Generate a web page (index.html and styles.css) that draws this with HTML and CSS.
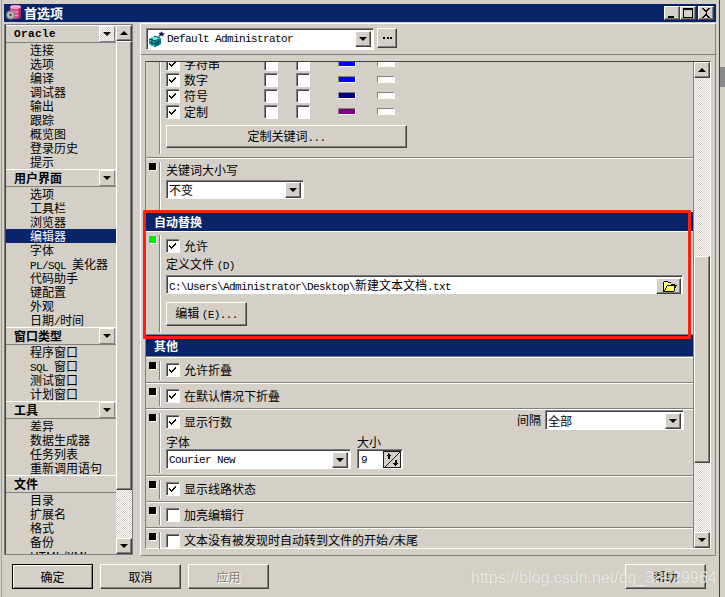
FILE: index.html
```html
<!DOCTYPE html>
<html lang="zh">
<head>
<meta charset="utf-8">
<title>首选项</title>
<link rel="stylesheet" href="styles.css">
</head>
<body>
<svg class="defs" width="0" height="0" aria-hidden="true">
  <symbol id="tick" viewBox="0 0 13 13"><path d="M3 6h1v1h1v1h1V7h1V6h1V5h1V4h1v2H9v1H8v1H7v1H6v1H5V9H4V8H3z" fill="#000"/></symbol>
</svg>
<div class="window">
  <header class="title">
    <svg class="ticon" width="16" height="16" viewBox="0 0 16 16">
      <path d="M4 2c0-3 11-3 11 0v10c0 2.500-11 2.500-11 0z" fill="#d84a90"/>
      <ellipse cx="9.500" cy="2" rx="5.500" ry="2" fill="#f4a8cc"/>
      <path d="M5 6c2 1.500 7 1.500 9 0M5 9.500c2 1.500 7 1.500 9 0" stroke="#f4a8cc" fill="none"/>
      <path d="M12.500 3.500h2.500v9l-2.500 1.500z" fill="#a02868"/>
      <circle cx="4.500" cy="10" r="4.500" fill="#8c8c8c"/>
      <circle cx="4.500" cy="10" r="3" fill="#c4c4c4"/>
      <circle cx="4.500" cy="10" r="1.400" fill="#505050"/>
    </svg>
    <span class="ttext">首选项</span>
    <div class="wbtns">
      <button class="wb"><svg width="14" height="12" viewBox="0 0 14 12" shape-rendering="crispEdges"><rect x="3" y="9" width="6" height="2"/></svg></button>
      <button class="wb"><svg width="14" height="12" viewBox="0 0 14 12" shape-rendering="crispEdges"><path d="M2 1h10v10H2zM3 3v7h8V3z" fill-rule="evenodd"/></svg></button>
      <button class="wb wb-close"><svg width="14" height="12" viewBox="0 0 14 12" shape-rendering="crispEdges"><path d="M3 1h2v1h1v1h2V2h1V1h2v1h-1v1H9v1H8v1H7.500v2H8v1h1v1h1v1h1v1H9v-1H8V9H6v1H5v1H3v-1h1V9h1V8h1V7h.5V5H6V4H5V3H4V2H3z"/></svg></button>
    </div>
  </header>

  <div class="columns">
    <aside class="side">
      <div class="list">
        <div class="lhead"><span class="mono-b">Oracle</span><span class="ldrop dither"><i class="dn"></i></span></div>
        <div class="li">连接</div><div class="li">选项</div><div class="li">编译</div><div class="li">调试器</div><div class="li">输出</div><div class="li">跟踪</div><div class="li">概览图</div><div class="li">登录历史</div><div class="li">提示</div>
        <div class="lhead"><b>用户界面</b><span class="ldrop"><i class="dn"></i></span></div>
        <div class="li">选项</div><div class="li">工具栏</div><div class="li">浏览器</div><div class="li sel">编辑器</div><div class="li">字体</div><div class="li"><span class="mono">PL/SQL </span>美化器</div><div class="li">代码助手</div><div class="li">键配置</div><div class="li">外观</div><div class="li">日期<span class="mono">/</span>时间</div>
        <div class="lhead"><b>窗口类型</b><span class="ldrop"><i class="dn"></i></span></div>
        <div class="li">程序窗口</div><div class="li"><span class="mono">SQL </span>窗口</div><div class="li">测试窗口</div><div class="li">计划窗口</div>
        <div class="lhead"><b>工具</b><span class="ldrop"><i class="dn"></i></span></div>
        <div class="li">差异</div><div class="li">数据生成器</div><div class="li">任务列表</div><div class="li">重新调用语句</div>
        <div class="lhead"><b>文件</b></div>
        <div class="li">目录</div><div class="li">扩展名</div><div class="li">格式</div><div class="li">备份</div><div class="li">HTML/XML</div>
      </div>
      <div class="sb">
        <div class="raised sbtn"><i class="up"></i></div>
        <div class="raised thumb side-thumb"></div>
        <div class="track dither"></div>
        <div class="raised sbtn"><i class="dn"></i></div>
      </div>
    </aside>

    <main class="main">
      <div class="tools">
        <div class="field combo profile">
          <svg class="picon" width="16" height="16" viewBox="0 0 16 16">
            <path d="M0 8l5-3 7 2v6l-6 3-6-3z" fill="#10c8c8"/>
            <path d="M6 9v7l6-3V7z" fill="#0a8a90"/>
            <path d="M0 8l5-3 7 2-6 2z" fill="#60eeee"/>
            <path d="M0 11l6 2 6-3M0 8l6 2M3 7v8M6 9v7M9 8v7M5 5l6 2" stroke="#043438" stroke-width=".9" fill="none"/>
            <path d="M9 6l2-3-2-1 3-.5L13 0l.5 2 2.500.5-2 1.500.5 2-2-1.500z" fill="#102050"/>
          </svg>
          <span class="mono ctext">Default Administrator</span>
          <span class="raised cbtn"><i class="dn"></i></span>
        </div>
        <button class="raised more"><svg width="9" height="3" viewBox="0 0 9 3" shape-rendering="crispEdges"><path d="M0 0h2v2H0zM3.500 0h2v2h-2zM7 0h2v2H7z"/></svg></button>
      </div>

      <div class="scroll">
        <div class="content">
          <section class="sec sec-top">
            <div class="gut gut-top"></div>
            <div class="body body-top">
              <div class="syn"><label class="chk"><span class="box"><svg width="13" height="13"><use href="#tick"/></svg></span>字符串</label><span class="box"></span><span class="box"></span><span class="sw sw-blue"></span><span class="sw"></span></div>
              <div class="syn"><label class="chk"><span class="box"><svg width="13" height="13"><use href="#tick"/></svg></span>数字</label><span class="box"></span><span class="box"></span><span class="sw sw-blue"></span><span class="sw"></span></div>
              <div class="syn"><label class="chk"><span class="box"><svg width="13" height="13"><use href="#tick"/></svg></span>符号</label><span class="box"></span><span class="box"></span><span class="sw sw-navy"></span><span class="sw"></span></div>
              <div class="syn"><label class="chk"><span class="box"><svg width="13" height="13"><use href="#tick"/></svg></span>定制</label><span class="box"></span><span class="box"></span><span class="sw sw-purple"></span><span class="sw"></span></div>
              <button class="raised btn-kw">定制关键词<span class="mono">...</span></button>
            </div>
          </section>

          <section class="sec sec-case">
            <div class="gut"><i class="sq"></i></div>
            <div class="body">
              <div class="lbl">关键词大小写</div>
              <div class="field combo combo-case"><span class="ctext">不变</span><span class="raised cbtn"><i class="dn"></i></span></div>
            </div>
          </section>

          <div class="hdr">自动替换</div>
          <section class="sec sec-auto">
            <div class="gut"><i class="sq sq-on"></i></div>
            <div class="body">
              <label class="chk"><span class="box"><svg width="13" height="13"><use href="#tick"/></svg></span>允许</label>
              <div class="lbl lbl-def">定义文件 <span class="mono">(D)</span></div>
              <div class="field combo path">
                <span class="mono ctext">C:\Users\Administrator\Desktop\<span class="cjk">新建文本文档</span>.txt</span>
                <span class="raised fbtn">
                  <svg width="18" height="14" viewBox="0 0 18 14" shape-rendering="crispEdges">
                    <path d="M3 3h1V2h4v1h3v2h4v1h2v1l-2 5H3z" fill="#ffff60"/>
                    <path d="M3 3h1V2h4v1h3v2h4v1h-4V4H8V3H4v9H3zM3 12h11v1H3zM7 6h10v1h-1v2h-1v3h-1V7H7zM4 11h1V9h1V7h1v2H6v2H5v1H4z" fill="#000"/>
                  </svg>
                </span>
              </div>
              <button class="raised btn-edit">编辑 <span class="mono">(E)...</span></button>
            </div>
          </section>

          <div class="hdr hdr-other">其他</div>
          <section class="sec row">
            <div class="gut"><i class="sq"></i></div>
            <div class="body"><label class="chk"><span class="box"><svg width="13" height="13"><use href="#tick"/></svg></span>允许折叠</label></div>
          </section>
          <section class="sec row">
            <div class="gut"><i class="sq"></i></div>
            <div class="body"><label class="chk"><span class="box"><svg width="13" height="13"><use href="#tick"/></svg></span>在默认情况下折叠</label></div>
          </section>
          <section class="sec sec-lines">
            <div class="gut"><i class="sq"></i></div>
            <div class="body">
              <div class="line-top">
                <label class="chk"><span class="box"><svg width="13" height="13"><use href="#tick"/></svg></span>显示行数</label>
                <div class="interval"><span>间隔</span><div class="field combo combo-int"><span class="ctext">全部</span><span class="raised cbtn"><i class="dn"></i></span></div></div>
              </div>
              <div class="font-row">
                <div class="font-col">
                  <div class="lbl">字体</div>
                  <div class="field combo combo-font"><span class="mono ctext">Courier New</span><span class="raised cbtn"><i class="dn"></i></span></div>
                </div>
                <div class="font-col">
                  <div class="lbl">大小</div>
                  <div class="field combo spin"><span class="mono ctext">9</span>
                    <svg class="spinb" width="18" height="17" viewBox="0 0 18 17" shape-rendering="crispEdges">
                      <rect width="18" height="17" fill="#d4d0c8"/>
                      <path d="M0 0h18v1H1v16H0zM17 0h1v17h-1zM0 16h18v1H0zM16 1h1v1h-1zM15 2h1v1h-1zM14 3h1v1h-1zM13 4h1v1h-1zM12 5h1v1h-1zM11 6h1v1h-1zM10 7h1v1h-1zM9 8h1v1H9zM8 9h1v1H8zM7 10h1v1H7zM6 11h1v1H6zM5 12h1v1H5zM4 13h1v1H4zM3 14h1v1H3zM2 15h1v1H2z" fill="#202020"/>
                      <path d="M5 2h1v1h1v1h1v1H7v3H5V5H4V4h1zM12 9h2v3h1v1h-1v1h-1v1h-1v-1h-1v-1h-1v-1h2z" fill="#000"/>
                    </svg>
                  </div>
                </div>
              </div>
            </div>
          </section>
          <section class="sec row">
            <div class="gut"><i class="sq"></i></div>
            <div class="body"><label class="chk"><span class="box"><svg width="13" height="13"><use href="#tick"/></svg></span>显示线路状态</label></div>
          </section>
          <section class="sec row">
            <div class="gut"><i class="sq"></i></div>
            <div class="body"><label class="chk"><span class="box"></span>加亮编辑行</label></div>
          </section>
          <section class="sec row">
            <div class="gut"><i class="sq"></i></div>
            <div class="body"><label class="chk"><span class="box"></span><span>文本没有被发现时自动转到文件的开始<span class="slash">/</span>末尾</span></label></div>
          </section>
        </div>
        <div class="sb sb-main">
          <div class="raised sbtn"><i class="up"></i></div>
          <div class="track dither track-a"></div>
          <div class="raised thumb main-thumb"></div>
          <div class="track dither"></div>
          <div class="raised sbtn"><i class="dn"></i></div>
        </div>
      </div>
    </main>
  </div>

  <footer class="foot">
    <button class="raised act act-default">确定</button>
    <button class="raised act">取消</button>
    <button class="raised act act-off">应用</button>
    <button class="raised act act-help">帮助</button>
  </footer>
</div>
<div class="strip"><div class="band"></div></div>
<div class="redbox"></div>
<div class="mark">https://blog.csdn.net/qq_38929964</div>
</body>
</html>
```

FILE: styles.css
```css
* { box-sizing: border-box; }
html, body { margin: 0; height: 100%; }
body {
  width: 725px;
  height: 597px;
  overflow: hidden;
  display: flex;
  background: #d4d0c8;
  color: #000;
  font: 12px/14px "Noto Sans CJK SC", "Liberation Sans", sans-serif;
  position: relative;
}
.defs { position: absolute; }
button { font: inherit; color: inherit; padding: 0; margin: 0; background: #d4d0c8; }
i { display: block; }

.mono { font: 11px/14px "Liberation Mono", monospace; letter-spacing: -.6px; }
.mono .cjk, .cjk { font: 12px/14px "Noto Sans CJK SC", sans-serif; letter-spacing: 0; }
.mono-b { font: bold 11px/14px "Liberation Mono", monospace; letter-spacing: .4px; }
.slash { font: 12px/14px "Liberation Mono", monospace; letter-spacing: -1.2px; }

.raised {
  background: #d4d0c8;
  border: 1px solid;
  border-color: #fff #404040 #404040 #fff;
  box-shadow: inset -1px -1px #808080;
}
.dither {
  background-color: #d4d0c8;
  background-image: conic-gradient(#fff 25%, #d4d0c8 0 50%, #fff 0 75%, #d4d0c8 0);
  background-size: 2px 2px;
}
.dn { width: 0; height: 0; border-style: solid; border-width: 4px 4px 0; border-color: #000 transparent transparent; }
.up { width: 0; height: 0; border-style: solid; border-width: 0 4px 4px; border-color: transparent transparent #000; }

/* window frame */
.window {
  width: 719px;
  height: 597px;
  margin-left: 1px;
  border-left: 1px solid #a0a0a0;
  border-right: 1px solid #404040;
  padding: 4px 3px 0 2px;
  flex: none;
  display: flex;
  flex-direction: column;
}
.title {
  height: 18px;
  flex: none;
  background: #0a246a;
  display: flex;
  align-items: center;
  padding-left: 2px;
  color: #fff;
}
.ticon { flex: none; margin-right: 2px; }
.ttext { font-weight: bold; font-size: 13px; line-height: 18px; }
.wbtns { margin-left: auto; display: flex; padding-right: 2px; }
.wb {
  width: 16px;
  height: 14px;
  border: 1px solid;
  border-color: #fff #404040 #404040 #fff;
  box-shadow: inset -1px -1px #808080;
  display: flex;
  align-items: center;
  justify-content: center;
}
.wb-close { margin-left: 2px; }

.columns { display: flex; flex: none; height: 533px; margin-top: 1px; gap: 7px; }

/* left navigator */
.side {
  width: 129px;
  height: 531px;
  margin-top: 1px;
  flex: none;
  border: 1px solid #808080;
  box-shadow: inset 1px 1px #404040;
  padding-left: 1px;
  display: flex;
}
.list { width: 110px; flex: none; overflow: hidden; }
.lhead {
  height: 18px;
  border-top: 1px solid #fff;
  border-bottom: 1px solid #808080;
  display: flex;
  align-items: center;
  justify-content: space-between;
  padding-left: 8px;
}
.lhead b { font-weight: bold; font-size: 12px; }
.ldrop {
  width: 16px;
  height: 16px;
  margin-right: 1px;
  border: 1px solid;
  border-color: #fff #808080 #808080 #fff;
  display: flex;
  align-items: center;
  justify-content: center;
}
.li { height: 14px; padding-left: 24px; line-height: 14px; white-space: nowrap; }
.li.sel { background: #0a246a; color: #fff; }

.sb { width: 16px; flex: none; display: flex; flex-direction: column; }
.sbtn { height: 16px; flex: none; display: flex; align-items: center; justify-content: center; }
.track { flex: 1; min-height: 0; }
.thumb { flex: none; }
.side-thumb { height: 449px; }
.sb-main { border-left: 1px solid #808080; width: 17px; }
.track-a { flex: none; height: 178px; }
.main-thumb { height: 207px; }

/* right panel */
.main {
  width: 576px;
  height: 533px;
  flex: none;
  border: 1px solid;
  border-color: #fff #808080 #808080 #fff;
  padding: 0 4px;
  display: flex;
  flex-direction: column;
}
.tools {
  height: 31px;
  flex: none;
  margin: 0 -4px;
  padding: 4px 0 0 5px;
  border-bottom: 1px solid #808080;
  display: flex;
  gap: 3px;
  align-items: flex-start;
  position: relative;
}
.field {
  background: #fff;
  border: 1px solid;
  border-color: #808080 #fff #fff #808080;
  box-shadow: inset 1px 1px #404040, 1px 1px #d4d0c8;
}
.combo { display: flex; align-items: center; height: 20px; padding: 2px 2px 1px 2px; }
.ctext { flex: 1; min-width: 0; white-space: nowrap; overflow: hidden; }
.cbtn {
  width: 16px;
  height: 16px;
  flex: none;
  display: flex;
  align-items: center;
  justify-content: center;
}
.profile { width: 228px; height: 22px; padding-bottom: 2px; }
.picon { flex: none; margin: 0 2px 0 0; }
.more { width: 20px; height: 20px; display: flex; align-items: center; justify-content: center; }
.more svg { display: block; }

.scroll {
  margin-top: 6px;
  width: 566px;
  height: 488px;
  flex: none;
  border-top: 1px solid #404040;
  border-left: 1px solid #808080;
  border-right: 1px solid #fff;
  border-bottom: 1px solid #fff;
  display: flex;
  position: relative;
}
.content { width: 547px; flex: none; overflow: hidden; height: 487px; }

.sec {
  display: flex;
  border-top: 1px solid #fff;
  border-bottom: 1px solid #808080;
  overflow: hidden;
}
.row { height: 26px; }
.sec-top { height: 96px; border-top: 0; }
.sec-case { height: 54px; border-bottom: 0; }
.sec-auto { height: 104px; }
.sec-lines { height: 67px; overflow: visible; }
.gut {
  width: 15px;
  flex: none;
  margin: 3px 0 2px;
  padding: 1px 0 0 3px;
  border-right: 1px solid #fff;
  box-shadow: inset -1px 0 #808080;
}
.gut-top { margin: 0 0 3px; }
.sq { width: 7px; height: 7px; background: #000; border: 1px solid #000; box-shadow: 1px 1px #fff; }
.sq-on { background: #00e800; border-color: #00f000; }
.body { flex: 1; min-width: 0; padding: 5px 9px 0 5px; }
.body-top { margin-top: -6px; padding-top: 0; overflow: visible; }
.sec-case .body { padding-top: 4px; }
.sec-auto .body { padding-top: 7px; }

.chk { display: flex; align-items: center; gap: 5px; height: 13px; white-space: nowrap; }
.box {
  width: 13px;
  height: 13px;
  flex: none;
  background: #fff;
  box-shadow: inset 1px 1px #808080, inset 2px 2px #404040, inset -1px -1px #fff, 1px 1px #fff;
  display: block;
}
.box svg { display: block; }
.syn {
  height: 16px;
  display: grid;
  grid-template-columns: 98px 32px 42px 39px 17px;
  align-items: start;
  padding-top: 1px;
}
.sw { width: 17px; height: 6px; margin-top: 3px; background: #fff; border-top: 1px solid #808080; border-left: 1px solid #808080; box-shadow: 1px 1px #fff; }
.sw-blue { background: #0000ff; }
.sw-navy { background: #000080; }
.sw-purple { background: #800080; }

.btn-kw { display: block; width: 241px; height: 23px; margin-top: 5px; }
.lbl { height: 14px; }
.combo-case { width: 138px; height: 19px; margin-top: 3px; }

.hdr {
  height: 19px;
  background: #0a246a;
  color: #fff;
  font-weight: bold;
  font-size: 12px;
  line-height: 19px;
  padding-left: 8px;
}
.hdr-other { height: 22px; line-height: 22px; border-bottom: 1px solid #808080; }

.lbl-def { margin-top: 5px; }
.path { width: 517px; height: 19px; margin-top: 4px; padding: 2px 1px 0 2px; }
.fbtn {
  width: 25px;
  height: 16px;
  flex: none;
  display: flex;
  align-items: center;
  justify-content: center;
}
.btn-edit { display: block; width: 81px; height: 24px; margin-top: 8px; }

.line-top { display: flex; justify-content: space-between; height: 13px; }
.interval { display: flex; gap: 4px; margin-top: -5px; height: 20px; align-items: center; }
.combo-int { width: 139px; }
.font-row { display: flex; gap: 6px; margin-top: 7px; }
.combo-font { width: 185px; }
.spin { width: 46px; padding: 1px 1px 0 3px; }
.spinb { display: block; flex: none; }

/* footer buttons */
.foot { flex: none; display: flex; gap: 7px; padding: 8px 10px 0 8px; }
.act { width: 81px; height: 25px; }
.act-default { outline: 1px solid #000; outline-offset: -1px; border-color: #000; box-shadow: inset 1px 1px #fff, inset -1px -1px #808080; }
.act-off { color: #808080; text-shadow: 1px 1px #fff; }
.act-help { margin-left: auto; }

/* neighbouring window at the edge */
.strip { flex: 1; padding-top: 67px; background: #d4d0c8; }
.band { height: 20px; background: #888; }

/* annotation + watermark */
.redbox {
  position: absolute;
  left: 143px;
  top: 210px;
  width: 548px;
  height: 129px;
  border: 3px solid #ff1e10;
  border-radius: 1px;
}
.mark {
  position: absolute;
  left: 471px;
  top: 569px;
  font: 16px/18px "Liberation Sans", sans-serif;
  color: rgba(255, 255, 255, .72);
  text-shadow: 0 0 1px rgba(120, 120, 120, .4);
  white-space: nowrap;
}
```
